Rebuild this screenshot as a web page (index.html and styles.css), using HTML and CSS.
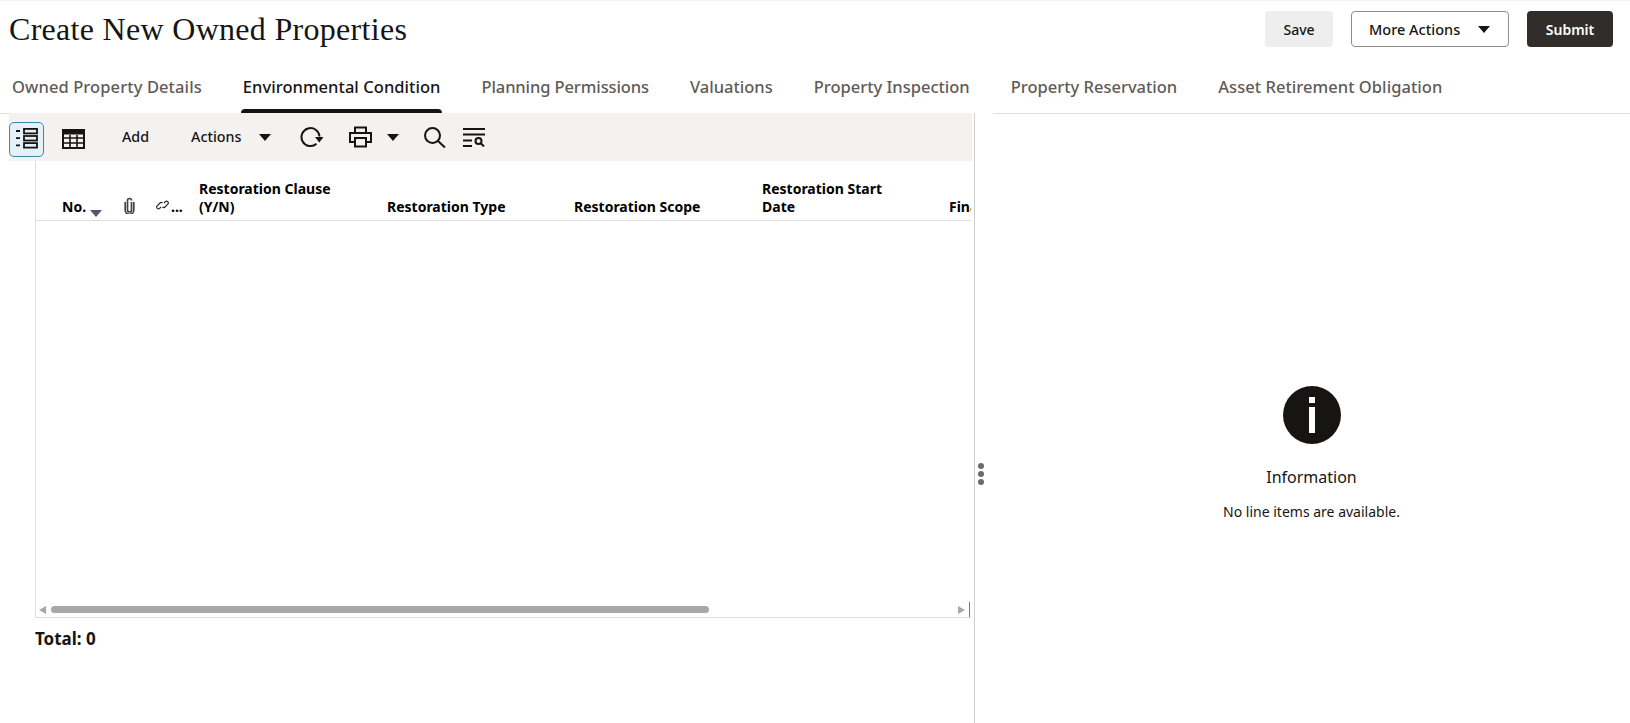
FILE: index.html
```html
<!DOCTYPE html>
<html lang="en">
<head>
<meta charset="utf-8">
<title>Create New Owned Properties</title>
<link rel="stylesheet" href="styles.css">
</head>
<body>
<div class="page">
  <header class="head">
    <h1 class="title">Create New Owned Properties</h1>
    <div class="actions">
      <button class="btn btn-save">Save</button>
      <button class="btn btn-more">More Actions<span class="caret caret-more"></span></button>
      <button class="btn btn-submit">Submit</button>
    </div>
  </header>
  <nav class="tabs">
    <div class="tabs-covered">
      <a class="tab tab-owned">Owned Property Details</a>
      <a class="tab tab-active">Environmental Condition</a>
      <a class="tab tab-plan">Planning Permissions</a>
      <a class="tab">Valuations</a>
      <a class="tab">Property Inspection</a>
    </div>
    <a class="tab">Property Reservation</a>
    <a class="tab tab-asset">Asset Retirement Obligation</a>
  </nav>
  <main class="split">
    <section class="left">
      <div class="toolbar">
        <button class="tool tool-on" aria-label="List view">
          <svg width="25" height="25" viewBox="0 0 25 25" fill="none" stroke="#161513" stroke-width="1.800"><path d="M2 4h4M2 11.200h4M2 18.400h4"/><rect x="10" y="1.900" width="13" height="4.500"/><rect x="10" y="9" width="13" height="4.500"/><rect x="10" y="16.100" width="13" height="4.500"/></svg>
        </button>
        <span class="tool tool-table">
          <svg width="23" height="20" viewBox="0 0 23 20" fill="none" stroke="#161513" stroke-width="1.600"><rect x="1" y="1" width="21" height="18" stroke-width="2"/><path d="M1 3.500h21" stroke-width="4"/><path d="M1 9h21M1 14h21M8 6v13M15 6v13"/></svg>
        </span>
        <span class="tool-text tool-add">Add</span>
        <span class="tool-text tool-actions">Actions</span>
        <span class="caret caret-actions"></span>
        <span class="tool tool-refresh">
          <svg width="23" height="22" viewBox="0 0 23 22" fill="none" stroke="#161513" stroke-width="2"><path d="M16.500 17.800A9 9 0 1 1 19.500 10.500"/><path d="M15 11h8.500l-4.200 5.500z" fill="#161513" stroke="none"/></svg>
        </span>
        <span class="tool tool-print">
          <svg width="23" height="22" viewBox="0 0 23 22" fill="none" stroke="#161513" stroke-width="2"><path d="M6 7V1.500h11V7"/><path d="M6 16H1V7h21v9h-5"/><rect x="6" y="12" width="11" height="8.500"/></svg>
        </span>
        <span class="caret caret-print"></span>
        <span class="tool tool-search">
          <svg width="22" height="21" viewBox="0 0 22 21" fill="none" stroke="#161513" stroke-width="2"><circle cx="8.500" cy="8.500" r="7.500"/><path d="M14 14l7 6.500"/></svg>
        </span>
        <span class="tool tool-filter">
          <svg width="22" height="19" viewBox="0 0 22 19" fill="none" stroke="#161513" stroke-width="2"><path d="M0 1h22M0 6.500h22M0 12.500h9M0 18h9"/><circle cx="15.500" cy="13" r="3"/><path d="M17.800 15.300l3.200 3.200"/></svg>
        </span>
      </div>
      <div class="grid-box">
        <div class="grid-head">
          <div class="col col-no">No.<span class="sort"></span></div>
          <div class="col col-clip">
            <svg width="11" height="17" viewBox="0 0 11 17" fill="none" stroke="#444" stroke-width="1.700"><path d="M7.500 5v8a2 2 0 0 1-4 0V3.500a2 2 0 0 1 4 0"/><path d="M1.200 5v8a4.300 4.300 0 0 0 8.600 0V5"/></svg>
          </div>
          <div class="col col-link">
            <svg class="link-icon" width="13" height="12" viewBox="0 0 13 12" fill="none" stroke="#222" stroke-width="1.100"><path d="M5 8 3.500 9.500a1.800 1.800 0 0 1-2.500-2.500l3-3a1.800 1.800 0 0 1 2.500 0"/><path d="M8 4l1.500-1.500a1.800 1.800 0 0 1 2.500 2.500l-3 3a1.800 1.800 0 0 1-2.500 0"/></svg>...
          </div>
          <div class="col col-w col-clause">Restoration Clause (Y/N)</div>
          <div class="col col-w col-type">Restoration Type</div>
          <div class="col col-w col-scope">Restoration Scope</div>
          <div class="col col-w col-date">Restoration Start Date</div>
          <div class="col col-fin">Final Date</div>
        </div>
        <div class="grid-body"></div>
        <div class="hscroll">
          <span class="arrow-left"></span>
          <span class="track"><span class="thumb"></span></span>
          <span class="arrow-right"></span>
          <span class="scroll-end"></span>
        </div>
      </div>
      <div class="total">Total: 0</div>
    </section>
    <div class="handle"><span class="dot"></span><span class="dot"></span><span class="dot"></span></div>
    <section class="right">
      <svg class="info" width="58" height="58" viewBox="0 0 58 58"><circle cx="29" cy="29" r="29" fill="#161513"/><rect x="26" y="11" width="6" height="6" fill="#fff"/><rect x="26" y="21" width="6" height="26" fill="#fff"/></svg>
      <div class="info-title">Information</div>
      <div class="info-text">No line items are available.</div>
    </section>
  </main>
</div>
</body>
</html>
```
FILE: styles.css
```css
* { box-sizing: border-box; }
html, body { margin: 0; height: 100%; background: #fff; }
body { font-family: "Noto Sans", "Open Sans", sans-serif; color: #161513; overflow: hidden; }
.page { width: 1630px; height: 723px; display: flex; flex-direction: column; border-top: 1px solid #f2f2f2; }

.head { height: 56px; flex: none; display: flex; justify-content: space-between; align-items: flex-start; padding: 10px 17px 0 9px; }
.title { margin: 0; font-family: "Liberation Serif", serif; font-weight: 400; font-size: 32px; letter-spacing: 0.3px; line-height: 36px; color: #161513; }
.actions { display: flex; gap: 18px; }
.btn { height: 36px; border-radius: 4px; font-family: inherit; font-size: 14.500px; font-weight: 500; display: flex; align-items: center; justify-content: center; padding: 0; border: 1px solid transparent; color: #161513; }
.btn-save { width: 68px; background: #eeeeee; font-size: 14px; }
.btn-more { width: 158px; background: #fff; border-color: #8f8c8a; justify-content: flex-start; padding-left: 17px; }
.btn-submit { width: 86px; background: #312d2a; color: #fff; font-weight: 600; font-size: 14px; }
.caret { display: inline-block; width: 0; height: 0; border-left: 6.500px solid transparent; border-right: 6.500px solid transparent; border-top: 7px solid #161513; }
.caret-more { margin-left: 18px; }

.tabs { height: 57px; flex: none; display: flex; align-items: stretch; padding-left: 9px; border-bottom: 1px solid #dedede; }
.tabs-covered { display: flex; gap: 37px; height: 57px; border-bottom: 1px solid #fff; padding-right: 21px; margin-right: 16px; padding-left: 1px; }
.tab { position: relative; padding: 15px 2px 0; font-size: 16.500px; line-height: 30px; color: #5f5b58; font-weight: 500; white-space: nowrap; }
.tab-owned { letter-spacing: 0.1px; }
.tab-plan { letter-spacing: -0.1px; }
.tab-asset { letter-spacing: 0.05px; }
.tabs > .tab { margin-right: 37px; }
.tab-active { color: #161513; letter-spacing: 0.05px; }
.tab-active::after { content: ""; position: absolute; left: 0; right: 0; bottom: 0; height: 4px; background: #161513; border-radius: 4px 4px 0 0; }

.split { flex: 1; display: flex; min-height: 0; margin-top: -1px; position: relative; }
.left { width: 975px; flex: none; border-right: 1px solid #cfcfcf; padding: 0 2px 0 9px; display: flex; flex-direction: column; }
.toolbar { height: 48px; background: #f3f2f0; display: flex; align-items: center; flex: none; }
.tool { display: flex; align-items: center; justify-content: center; }
.tool-on { width: 35px; height: 35px; padding: 0; margin-top: 4px; background: #e4f1f7; border: 1px solid #3d8aa6; border-radius: 5px; }
.tool-table { margin: 3px 0 0 18px; }
.tool-text { font-size: 14.300px; font-weight: 500; line-height: 20px; }
.tool-add { margin-left: 37px; }
.tool-actions { margin-left: 42px; }
.caret-actions { margin-left: 18px; }
.tool-refresh { margin-left: 29px; }
.tool-print { margin-left: 26px; }
.caret-print { margin-left: 15px; }
.tool-search { margin-left: 25px; }
.tool-filter { margin-left: 17px; }

.grid-box { margin-left: 26px; width: 936px; height: 457px; border-left: 1px solid #dedede; border-bottom: 1px solid #dedede; display: flex; flex-direction: column; overflow: hidden; flex: none; }
.grid-head { height: 60px; flex: none; display: grid; grid-template-columns: 26px 62px 32px 43px 188px 187px 188px 187px 100px; border-bottom: 1px solid #dedede; align-items: end; padding-bottom: 4px; font-size: 14px; font-weight: 700; line-height: 18px; color: #000; }
.col { white-space: normal; }
.col-no { grid-column: 2; position: relative; }
.col-clip { grid-column: 3; line-height: 0; padding-bottom: 2px; }
.col-link { grid-column: 4; white-space: nowrap; }
.link-icon { margin-right: 2px; vertical-align: 1px; }
.col-w { width: 135px; }
.col-clause { grid-column: 5; }
.col-type { grid-column: 6; width: auto; }
.col-scope { grid-column: 7; width: auto; }
.col-date { grid-column: 8; width: 125px; }
.col-fin { grid-column: 9; white-space: nowrap; }
.sort { position: absolute; left: 28px; top: 12px; width: 0; height: 0; border-left: 6.500px solid transparent; border-right: 6.500px solid transparent; border-top: 7px solid #4f5a70; }
.grid-body { flex: 1; }
.hscroll { height: 15px; flex: none; display: flex; align-items: center; padding-left: 3px; }
.arrow-left { width: 0; height: 0; border-top: 4px solid transparent; border-bottom: 4px solid transparent; border-right: 7px solid #a8a8a8; }
.track { width: 907px; margin-left: 5px; }
.thumb { display: block; width: 658px; height: 7px; border-radius: 4px; background: #a8a8a8; }
.arrow-right { width: 0; height: 0; border-top: 4px solid transparent; border-bottom: 4px solid transparent; border-left: 7px solid #a8a8a8; }
.scroll-end { width: 1px; height: 15px; background: #777; margin-left: 4px; }
.total { margin: 10px 0 0 26px; font-size: 17px; font-weight: 700; line-height: 22px; color: #161513; }

.handle { width: 0; position: relative; }
.dot { position: absolute; left: 3px; width: 6px; height: 6px; border-radius: 50%; background: #6b6b6b; }
.dot:nth-child(1) { top: 350px; }
.dot:nth-child(2) { top: 358px; }
.dot:nth-child(3) { top: 366px; }

.right { flex: 1; display: flex; flex-direction: column; align-items: center; padding: 273px 0 0 18px; }
.info { display: block; }
.info-title { margin-top: 21px; font-size: 16px; line-height: 24px; color: #161513; }
.info-text { margin-top: 13px; font-size: 14px; line-height: 20px; color: #161513; }
```
